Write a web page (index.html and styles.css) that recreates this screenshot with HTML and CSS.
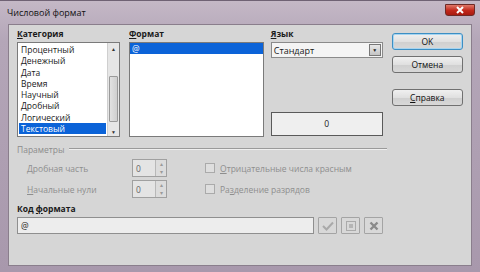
FILE: index.html
```html
<!DOCTYPE html>
<html lang="ru">
<head>
    <meta charset="UTF-8">
    <title>Числовой формат</title>
    <link rel="stylesheet" href="styles.css">
</head>
<body>
    <div class="window">
        <div class="titlebar">
            <span class="title">Числовой формат</span>
            <span class="close">
                <svg width="10" height="8" viewBox="0 0 10 8"><path d="M2 1 L8 7 M8 1 L2 7" stroke="#fff" stroke-width="2"/></svg>
            </span>
        </div>
        <div class="content">
            <div class="top">
                <div class="col cat">
                    <p class="label bold"><u>К</u>атегория</p>
                    <div class="list">
                        <div class="items">
                            <p>Процентный</p>
                            <p>Денежный</p>
                            <p>Дата</p>
                            <p>Время</p>
                            <p>Научный</p>
                            <p>Дробный</p>
                            <p>Логический</p>
                            <p class="sel">Текстовый</p>
                        </div>
                        <div class="scroll">
                            <span class="arrow">&#9650;</span>
                            <span class="track"><span class="thumb"></span></span>
                            <span class="arrow">&#9660;</span>
                        </div>
                    </div>
                </div>
                <div class="col fmt">
                    <p class="label bold"><u>Ф</u>ормат</p>
                    <div class="list">
                        <div class="items full">
                            <p class="sel">@</p>
                        </div>
                    </div>
                </div>
                <div class="col lang">
                    <p class="label bold"><u>Я</u>зык</p>
                    <div class="select">
                        <span>Стандарт</span>
                        <span class="drop">&#9660;</span>
                    </div>
                    <div class="preview">0</div>
                </div>
                <div class="col buttons">
                    <button class="btn ok">OK</button>
                    <button class="btn">Отмена</button>
                    <button class="btn help"><u>С</u>правка</button>
                </div>
            </div>

            <div class="group">
                <span>Параметры</span>
                <span class="line"></span>
            </div>
            <div class="params">
                <div class="spins">
                    <div class="row">
                        <span class="plabel"><u>Д</u>робная часть</span>
                        <span class="spin"><span>0</span><span class="arrows"><i>&#9652;</i><i>&#9662;</i></span></span>
                    </div>
                    <div class="row">
                        <span class="plabel"><u>Н</u>ачальные нули</span>
                        <span class="spin"><span>0</span><span class="arrows"><i>&#9652;</i><i>&#9662;</i></span></span>
                    </div>
                </div>
                <div class="checks">
                    <div class="row"><span class="box"></span><span><u>О</u>трицательные числа красным</span></div>
                    <div class="row"><span class="box"></span><span>Ра<u>з</u>деление разрядов</span></div>
                </div>
            </div>

            <p class="label bold code">Код <u>ф</u>ормата</p>
            <div class="coderow">
                <div class="input">@</div>
                <span class="ibtn">
                    <svg width="12" height="10" viewBox="0 0 12 10"><path d="M1 5 L4.5 8.5 L11 1.5" fill="none" stroke="#a9a9a9" stroke-width="2"/></svg>
                </span>
                <span class="ibtn">
                    <svg width="10" height="10" viewBox="0 0 10 10"><rect x="0.5" y="0.5" width="9" height="9" fill="none" stroke="#aaa"/><rect x="3" y="3" width="4" height="4" fill="#b5b5b5"/></svg>
                </span>
                <span class="ibtn">
                    <svg width="10" height="10" viewBox="0 0 10 10"><path d="M1.5 1.5 L8.5 8.5 M8.5 1.5 L1.5 8.5" stroke="#8a8a8a" stroke-width="2.4"/></svg>
                </span>
            </div>
        </div>
    </div>
</body>
</html>
```

FILE: styles.css
```css
* {
    margin: 0;
    padding: 0;
    box-sizing: border-box;
}

body {
    font-family: "Open Sans", "Liberation Sans", sans-serif;
    font-size: 8.5px;
    color: #1a1a1a;
    background: #9c8aa0;
}

u {
    text-decoration: underline;
    text-underline-offset: 1px;
}

.window {
    width: 480px;
    height: 272px;
    display: flex;
    flex-direction: column;
    padding: 0 8px 6px 8px;
    background: linear-gradient(to bottom, #c4b8c6, #b4a6b8 40px, #a898ac);
    border-top: 1px solid #6f6274;
}

.titlebar {
    height: 23px;
    display: flex;
    align-items: flex-start;
    justify-content: space-between;
}

.title {
    font-size: 9px;
    color: #111;
    margin-top: 5px;
    margin-left: -1px;
}

.close {
    width: 30px;
    height: 12px;
    margin-top: 3px;
    margin-right: -3px;
    display: flex;
    align-items: center;
    justify-content: center;
    background: linear-gradient(to bottom, #e0786a, #c2281c 55%, #a81a10);
    border: 1px solid #6e2a26;
    border-radius: 0 0 3px 3px;
}

.content {
    flex: 1;
    background: #d6d6d6;
    border: 1px solid #8a7e8c;
    padding: 3px 8px 0 8px;
}

.label {
    height: 14px;
    line-height: 12px;
}

.bold {
    font-weight: bold;
}

.top {
    display: flex;
}

.col {
    display: flex;
    flex-direction: column;
}

.cat {
    width: 104px;
    margin-right: 9px;
}

.fmt {
    width: 136px;
    margin-right: 7px;
}

.lang {
    width: 113px;
    margin-right: 9px;
}

.buttons {
    width: 72px;
    padding-top: 5px;
}

.list {
    height: 95px;
    background: #fff;
    border: 1px solid #7a7a7a;
    display: flex;
}

.items {
    flex: 1;
    padding: 1px 1px 0 1px;
}

.items p {
    height: 11.3px;
    line-height: 11.3px;
    padding-left: 2px;
}

.items .sel {
    background: #0b63d8;
    color: #fff;
}

.items.full {
    padding: 0;
}

.scroll {
    width: 12px;
    background: #e6e6e6;
    border-left: 1px solid #cfcfcf;
    display: flex;
    flex-direction: column;
    align-items: center;
}

.arrow {
    height: 12px;
    font-size: 5px;
    line-height: 12px;
    color: #333;
}

.track {
    flex: 1;
    width: 100%;
    padding-top: 21px;
    padding-bottom: 4px;
}

.thumb {
    display: block;
    height: 46px;
    margin: 0 1px;
    background: linear-gradient(to right, #e2e2e2, #cfcfcf);
    border: 1px solid #9a9a9a;
    border-radius: 1px;
}

.select {
    height: 16px;
    background: #f4f4f4;
    border: 1px solid #8a8a8a;
    display: flex;
    align-items: center;
    justify-content: space-between;
    padding-left: 2px;
    font-size: 9px;
}

.drop {
    width: 12px;
    height: 12px;
    margin-right: 1px;
    background: linear-gradient(to bottom, #e8e8e8, #c4c4c4);
    border: 1px solid #777;
    font-size: 5px;
    line-height: 10px;
    text-align: center;
    color: #222;
}

.preview {
    margin-top: 54px;
    height: 24px;
    background: #efefef;
    border: 1px solid #5a5a5a;
    text-align: center;
    line-height: 22px;
}

.btn {
    height: 17px;
    font-family: inherit;
    font-size: 8.5px;
    color: #111;
    background: linear-gradient(to bottom, #f0f0f0, #e0e0e0 50%, #cfcfcf 51%, #d8d8d8);
    border: 1px solid #707070;
    border-radius: 3px;
    margin-bottom: 6px;
}

.btn.ok {
    border-color: #3c8fc4;
    box-shadow: inset 0 0 0 1px #a6d4f0;
}

.btn.help {
    margin-top: 10px;
}

.group {
    display: flex;
    align-items: center;
    margin-top: 6px;
    height: 12px;
    color: #8c8c8c;
}

.line {
    height: 2px;
    width: 318px;
    margin-left: 4px;
    border-top: 1px solid #9a9a9a;
    border-bottom: 1px solid #efefef;
}

.params {
    display: flex;
    color: #8e8e8e;
    margin-top: 4px;
}

.spins {
    width: 188px;
    padding-left: 10px;
}

.spins .row {
    display: flex;
    align-items: center;
    height: 18px;
    margin-bottom: 3px;
}

.plabel {
    width: 105px;
}

.spin {
    width: 35px;
    height: 18px;
    display: flex;
    justify-content: space-between;
    align-items: center;
    padding-left: 3px;
    background: #e4e4e4;
    border: 1px solid #a0a0a0;
    color: #666;
}

.arrows {
    width: 11px;
    height: 16px;
    display: flex;
    flex-direction: column;
    border-left: 1px solid #b8b8b8;
    background: #dcdcdc;
}

.arrows i {
    flex: 1;
    font-style: normal;
    font-size: 6px;
    line-height: 8px;
    text-align: center;
    color: #9a9a9a;
}

.checks .row {
    display: flex;
    align-items: center;
    height: 18px;
    margin-bottom: 3px;
}

.box {
    width: 10px;
    height: 10px;
    margin-right: 5px;
    background: #dedede;
    border: 1px solid #aaa;
}

.code {
    margin-top: 2px;
}

.coderow {
    display: flex;
    gap: 4px;
}

.input {
    width: 297px;
    height: 17px;
    background: #ededed;
    border: 1px solid #8f8f8f;
    padding-left: 3px;
    line-height: 15px;
}

.ibtn {
    width: 19px;
    height: 17px;
    border: 1px solid #a4a4a4;
    border-radius: 1px;
    display: flex;
    align-items: center;
    justify-content: center;
    background: #d8d8d8;
}
```
